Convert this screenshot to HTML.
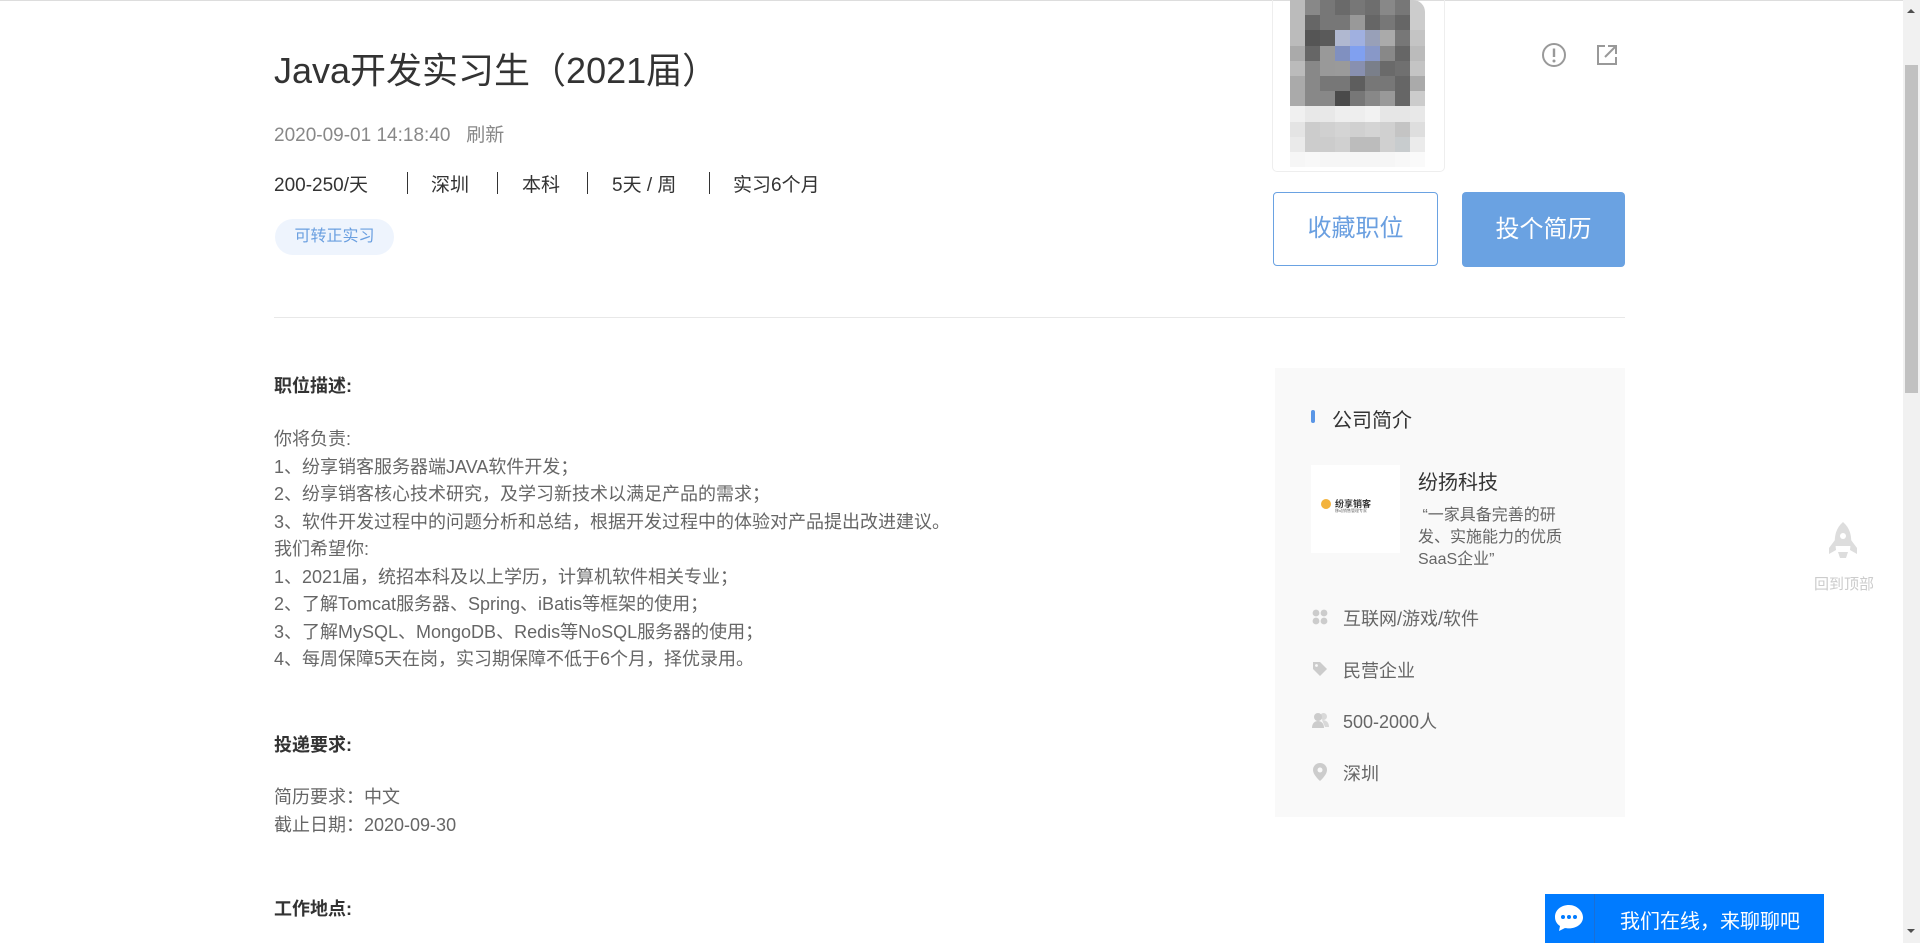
<!DOCTYPE html>
<html><head><meta charset="utf-8">
<style>
*{margin:0;padding:0;box-sizing:border-box}
html,body{width:1920px;height:943px;overflow:hidden;background:#fff;font-family:"Liberation Sans","Noto Sans CJK SC",sans-serif;color:#333}
.a{position:absolute;white-space:nowrap}
.grid{position:absolute;left:1290px;top:0;display:grid;grid-template-columns:repeat(9,15px);grid-auto-rows:15.2px;border-top-right-radius:12px;overflow:hidden}
.grid div{width:15px;height:15.2px}
.body{position:absolute;left:274px;font-size:18px;line-height:27.5px;color:#666}
.h{position:absolute;left:274px;font-size:18px;font-weight:bold;color:#333}
.li{position:absolute;left:1343px;font-size:18px;color:#666}
</style></head><body>
<div class="a" style="left:0;top:0;width:1920px;height:1px;background:#ddd"></div>

<div class="a" style="left:274px;top:42px;font-size:36px;color:#333">Java开发实习生（2021届）</div>
<div class="a" style="left:274px;top:120px;font-size:19px;color:#888">2020-09-01 14:18:40 &nbsp;&nbsp;刷新</div>
<div class="a" style="left:274px;top:170px;font-size:19px">200-250/天</div>
<div class="a" style="left:431px;top:170px;font-size:19px">深圳</div>
<div class="a" style="left:522px;top:170px;font-size:19px">本科</div>
<div class="a" style="left:612px;top:170px;font-size:19px">5天 / 周</div>
<div class="a" style="left:733px;top:170px;font-size:19px">实习6个月</div>
<div class="a" style="left:407px;top:172px;width:1px;height:22px;background:#333"></div>
<div class="a" style="left:497px;top:172px;width:1px;height:22px;background:#333"></div>
<div class="a" style="left:587px;top:172px;width:1px;height:22px;background:#333"></div>
<div class="a" style="left:709px;top:172px;width:1px;height:22px;background:#333"></div>
<div class="a" style="left:275px;top:219px;width:119px;height:36px;border-radius:18px;background:#eef4fd;color:#6a9fe0;font-size:16px;line-height:36px;text-align:center">可转正实习</div>

<div class="a" style="left:1272px;top:0;width:173px;height:172px;border:1px solid #eee;border-top:none;border-radius:0 0 5px 5px"></div>
<div class="grid">
<div style="background:#bbb"></div><div style="background:#888"></div><div style="background:#777"></div><div style="background:#6a6a6a"></div><div style="background:#777"></div><div style="background:#6e6e6e"></div><div style="background:#888"></div><div style="background:#777"></div><div style="background:#ccc"></div>
<div style="background:#bbb"></div><div style="background:#666"></div><div style="background:#777"></div><div style="background:#777"></div><div style="background:#999"></div><div style="background:#666"></div><div style="background:#777"></div><div style="background:#666"></div><div style="background:#ccc"></div>
<div style="background:#bbb"></div><div style="background:#555"></div><div style="background:#5a5a5a"></div><div style="background:#b0b8d0"></div><div style="background:#a0b0e0"></div><div style="background:#98a0b8"></div><div style="background:#aaa"></div><div style="background:#777"></div><div style="background:#c4c4c4"></div>
<div style="background:#aaa"></div><div style="background:#666"></div><div style="background:#999"></div><div style="background:#8090c0"></div><div style="background:#80a0f0"></div><div style="background:#8898c8"></div><div style="background:#888"></div><div style="background:#666"></div><div style="background:#bbb"></div>
<div style="background:#bbb"></div><div style="background:#888"></div><div style="background:#999"></div><div style="background:#9a9a9a"></div><div style="background:#8890b0"></div><div style="background:#7a7f8a"></div><div style="background:#6a6a6a"></div><div style="background:#707070"></div><div style="background:#c4c4c4"></div>
<div style="background:#aaa"></div><div style="background:#888"></div><div style="background:#777"></div><div style="background:#777"></div><div style="background:#5e5e5e"></div><div style="background:#777"></div><div style="background:#777"></div><div style="background:#666"></div><div style="background:#aaa"></div>
<div style="background:#aaa"></div><div style="background:#888"></div><div style="background:#888"></div><div style="background:#4a4a4a"></div><div style="background:#777"></div><div style="background:#888"></div><div style="background:#999"></div><div style="background:#666"></div><div style="background:#ccc"></div>
<div style="background:#f0f0f0"></div><div style="background:#e8e8e8"></div><div style="background:#e8e8e8"></div><div style="background:#eee"></div><div style="background:#eee"></div><div style="background:#f2f2f2"></div><div style="background:#e6e6e6"></div><div style="background:#e6e6e6"></div><div style="background:#e8e8e8"></div>
<div style="background:#e4e4e4"></div><div style="background:#ccc"></div><div style="background:#d0d0d0"></div><div style="background:#d4d4d4"></div><div style="background:#d0d0d0"></div><div style="background:#d4d4d4"></div><div style="background:#d0d0d0"></div><div style="background:#c4c4c4"></div><div style="background:#dedede"></div>
<div style="background:#eaeaea"></div><div style="background:#ccc"></div><div style="background:#ccc"></div><div style="background:#d0d0d0"></div><div style="background:#bcbcbc"></div><div style="background:#bcbcbc"></div><div style="background:#d0d0d0"></div><div style="background:#c8ccce"></div><div style="background:#ebebeb"></div>
<div style="background:#f6f6f6"></div><div style="background:#f8f8f8"></div><div style="background:#f6f6f6"></div><div style="background:#f6f6f6"></div><div style="background:#f6f6f6"></div><div style="background:#f6f6f6"></div><div style="background:#f6f6f6"></div><div style="background:#f8f8f8"></div><div style="background:#fafafa"></div>
</div>

<svg class="a" style="left:1541px;top:42px" width="26" height="26" viewBox="0 0 26 26"><circle cx="13" cy="13" r="11" fill="none" stroke="#999" stroke-width="2"/><line x1="13" y1="6.5" x2="13" y2="15" stroke="#999" stroke-width="2.4"/><circle cx="13" cy="19" r="1.5" fill="#999"/></svg>
<svg class="a" style="left:1596px;top:44px" width="22" height="22" viewBox="0 0 22 22"><path d="M9 2H2v18h18v-7" fill="none" stroke="#999" stroke-width="2"/><path d="M12 2h8v8M20 2L9 13" fill="none" stroke="#999" stroke-width="2"/></svg>

<div class="a" style="left:1273px;top:192px;width:165px;height:74px;border:1px solid #6aa2e2;border-radius:4px;color:#6a9fe0;font-size:24px;line-height:72px;text-align:center">收藏职位</div>
<div class="a" style="left:1462px;top:192px;width:163px;height:75px;background:#6aa2e2;border-radius:4px;color:#fff;font-size:24px;line-height:75px;text-align:center">投个简历</div>

<div class="a" style="left:274px;top:317px;width:1351px;height:1px;background:#e8e8e8"></div>

<div class="h" style="top:372px">职位描述:</div>
<div class="body" style="top:426px">你将负责:<br>1、纷享销客服务器端JAVA软件开发；<br>2、纷享销客核心技术研究，及学习新技术以满足产品的需求；<br>3、软件开发过程中的问题分析和总结，根据开发过程中的体验对产品提出改进建议。<br>我们希望你:<br>1、2021届，统招本科及以上学历，计算机软件相关专业；<br>2、了解Tomcat服务器、Spring、iBatis等框架的使用；<br>3、了解MySQL、MongoDB、Redis等NoSQL服务器的使用；<br>4、每周保障5天在岗，实习期保障不低于6个月，择优录用。</div>
<div class="h" style="top:731px">投递要求:</div>
<div class="body" style="top:784px">简历要求：中文<br>截止日期：2020-09-30</div>
<div class="h" style="top:895px">工作地点:</div>

<div class="a" style="left:1275px;top:368px;width:350px;height:449px;background:#f9f9f9"></div>
<div class="a" style="left:1311px;top:410px;width:4px;height:13px;border-radius:2px;background:#5a96e6"></div>
<div class="a" style="left:1332px;top:404px;font-size:20px;color:#333">公司简介</div>
<div class="a" style="left:1311px;top:465px;width:89px;height:88px;background:#fff"></div>
<div class="a" style="left:1321px;top:499px;width:10px;height:10px;border-radius:50%;background:#f3b33d"></div>
<div class="a" style="left:1335px;top:497px;font-size:9px;font-weight:bold;color:#333">纷享销客</div>
<div class="a" style="left:1335px;top:508px;font-size:4px;color:#666">移动销售管理专家</div>
<div class="a" style="left:1418px;top:466px;font-size:20px;color:#333">纷扬科技</div>
<div class="a" style="left:1418px;top:505px;font-size:16px;line-height:22px;color:#666;white-space:normal;width:150px">&nbsp;“一家具备完善的研发、实施能力的优质SaaS企业”</div>

<svg class="a" style="left:1312px;top:609px" width="16" height="16" viewBox="0 0 16 16" fill="#ccc"><circle cx="4" cy="4" r="3.4"/><circle cx="12" cy="4" r="3.4"/><circle cx="4" cy="12" r="3.4"/><circle cx="12" cy="12" r="3.4"/></svg>
<div class="li" style="top:605px">互联网/游戏/软件</div>
<svg class="a" style="left:1312px;top:661px" width="16" height="16" viewBox="0 0 16 16" fill="#ccc"><path d="M1 1h7l7 7-7 7-7-7z"/><circle cx="4.5" cy="4.5" r="1.4" fill="#f9f9f9"/></svg>
<div class="li" style="top:657px">民营企业</div>
<svg class="a" style="left:1312px;top:712px" width="17" height="16" viewBox="0 0 17 16" fill="#ccc"><circle cx="6" cy="5" r="4"/><path d="M0 16c0-5 3-7 6-7s6 2 6 7z"/><circle cx="11.5" cy="4.5" r="3.5" opacity=".7"/><path d="M10 8c4 0 7 2 7 7h-4z" opacity=".7"/></svg>
<div class="li" style="top:708px">500-2000人</div>
<svg class="a" style="left:1313px;top:763px" width="14" height="18" viewBox="0 0 14 18" fill="#ccc"><path d="M7 0a7 7 0 0 1 7 7c0 5-7 11-7 11S0 12 0 7a7 7 0 0 1 7-7z"/><circle cx="7" cy="7" r="2.5" fill="#f9f9f9"/></svg>
<div class="li" style="top:760px">深圳</div>

<svg class="a" style="left:1828px;top:522px" width="30" height="42" viewBox="0 0 30 42" fill="#ddd"><path d="M15 0c7 6 9 14 8 24H7C6 14 8 6 15 0z"/><path d="M7 18l-6 8v6l7-4zM23 18l6 8v6l-7-4z"/><path d="M10 30h10l-2 6h-6z"/><circle cx="15" cy="14" r="3" fill="#fff"/></svg>
<div class="a" style="left:1814px;top:573px;font-size:15px;color:#ccc">回到顶部</div>

<div class="a" style="left:1545px;top:894px;width:279px;height:49px;background:#007bff"></div>
<div class="a" style="left:1594px;top:894px;width:1px;height:49px;background:#1a6fd6"></div>
<svg class="a" style="left:1554px;top:904px" width="30" height="28" viewBox="0 0 30 28"><path d="M15 1C7 1 1 6 1 13c0 4 2 7 5 9l-1 5 6-3c1 .3 2.5.4 4 .4 8 0 14-5 14-11S23 1 15 1z" fill="#fff"/><circle cx="9" cy="13" r="2" fill="#007bff"/><circle cx="15" cy="13" r="2" fill="#007bff"/><circle cx="21" cy="13" r="2" fill="#007bff"/></svg>
<div class="a" style="left:1620px;top:905px;font-size:20px;color:#fff">我们在线，来聊聊吧</div>

<div class="a" style="left:1903px;top:0;width:17px;height:943px;background:#f1f1f1"></div>
<div class="a" style="left:1905px;top:65px;width:13px;height:328px;background:#c1c1c1"></div>
<div class="a" style="left:1907px;top:9px;width:0;height:0;border-left:4px solid transparent;border-right:4px solid transparent;border-bottom:4px solid #505050"></div>
<div class="a" style="left:1907px;top:929px;width:0;height:0;border-left:4px solid transparent;border-right:4px solid transparent;border-top:4px solid #505050"></div>
</body></html>
